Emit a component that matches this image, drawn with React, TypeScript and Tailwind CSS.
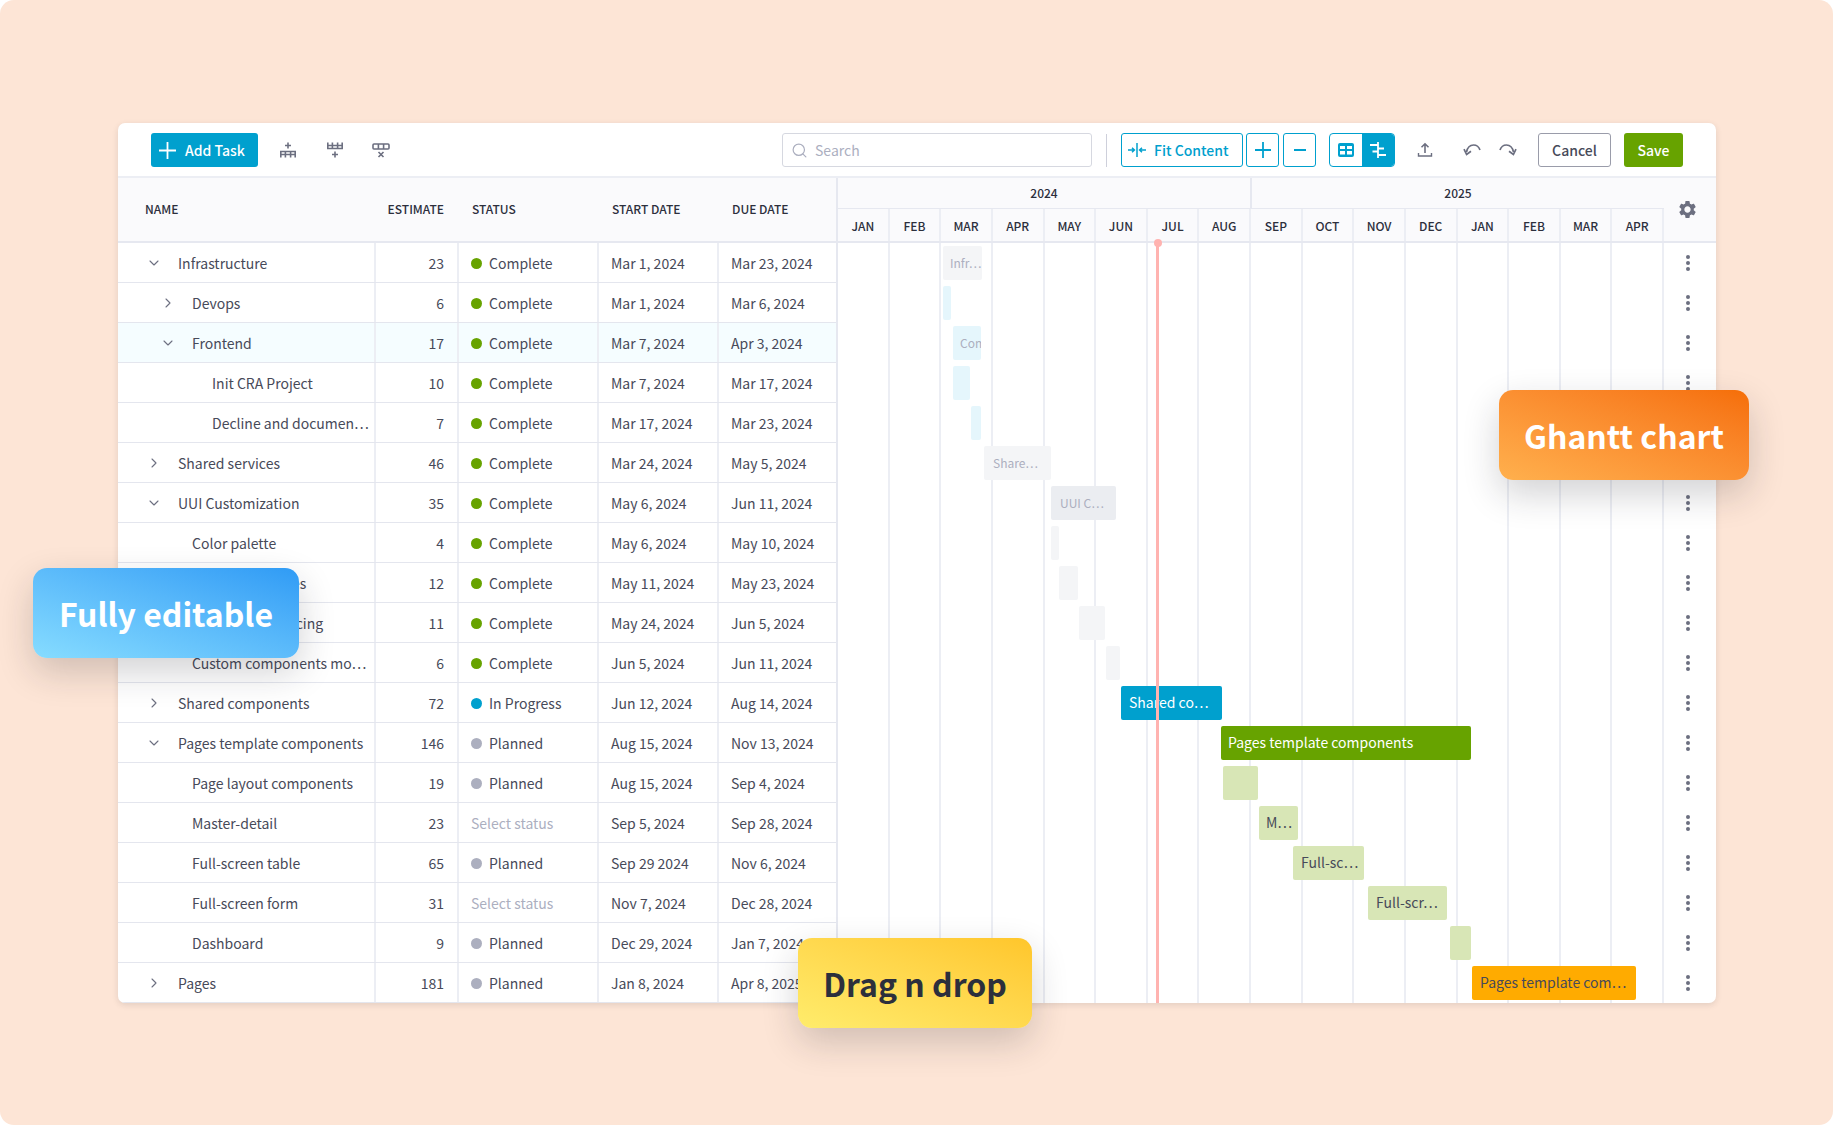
import { MdSettings } from 'react-icons/md';
import { ChevronDown, ChevronRight, Search } from 'lucide-react';

interface Row {
  name: string;
  level: number;
  open?: boolean;
  estimate: number;
  status: string;
  start: string;
  due: string;
  hover?: boolean;
}

const rows: Row[] = [
  { name: 'Infrastructure', level: 0, open: true, estimate: 23, status: 'Complete', start: 'Mar 1, 2024', due: 'Mar 23, 2024' },
  { name: 'Devops', level: 1, open: false, estimate: 6, status: 'Complete', start: 'Mar 1, 2024', due: 'Mar 6, 2024' },
  { name: 'Frontend', level: 1, open: true, estimate: 17, status: 'Complete', start: 'Mar 7, 2024', due: 'Apr 3, 2024', hover: true },
  { name: 'Init CRA Project', level: 2, estimate: 10, status: 'Complete', start: 'Mar 7, 2024', due: 'Mar 17, 2024' },
  { name: 'Decline and documen…', level: 2, estimate: 7, status: 'Complete', start: 'Mar 17, 2024', due: 'Mar 23, 2024' },
  { name: 'Shared services', level: 0, open: false, estimate: 46, status: 'Complete', start: 'Mar 24, 2024', due: 'May 5, 2024' },
  { name: 'UUI Customization', level: 0, open: true, estimate: 35, status: 'Complete', start: 'May 6, 2024', due: 'Jun 11, 2024' },
  { name: 'Color palette', level: 1, estimate: 4, status: 'Complete', start: 'May 6, 2024', due: 'May 10, 2024' },
  { name: 'Spacing variables', level: 1, estimate: 12, status: 'Complete', start: 'May 11, 2024', due: 'May 23, 2024' },
  { name: 'Component spacing', level: 1, estimate: 11, status: 'Complete', start: 'May 24, 2024', due: 'Jun 5, 2024' },
  { name: 'Custom components mo…', level: 1, estimate: 6, status: 'Complete', start: 'Jun 5, 2024', due: 'Jun 11, 2024' },
  { name: 'Shared components', level: 0, open: false, estimate: 72, status: 'In Progress', start: 'Jun 12, 2024', due: 'Aug 14, 2024' },
  { name: 'Pages template components', level: 0, open: true, estimate: 146, status: 'Planned', start: 'Aug 15, 2024', due: 'Nov 13, 2024' },
  { name: 'Page layout components', level: 1, estimate: 19, status: 'Planned', start: 'Aug 15, 2024', due: 'Sep 4, 2024' },
  { name: 'Master-detail', level: 1, estimate: 23, status: 'Select status', start: 'Sep 5, 2024', due: 'Sep 28, 2024' },
  { name: 'Full-screen table', level: 1, estimate: 65, status: 'Planned', start: 'Sep 29 2024', due: 'Nov 6, 2024' },
  { name: 'Full-screen form', level: 1, estimate: 31, status: 'Select status', start: 'Nov 7, 2024', due: 'Dec 28, 2024' },
  { name: 'Dashboard', level: 1, estimate: 9, status: 'Planned', start: 'Dec 29, 2024', due: 'Jan 7, 2024' },
  { name: 'Pages', level: 0, open: false, estimate: 181, status: 'Planned', start: 'Jan 8, 2024', due: 'Apr 8, 2025' },
];

const months = ['JAN', 'FEB', 'MAR', 'APR', 'MAY', 'JUN', 'JUL', 'AUG', 'SEP', 'OCT', 'NOV', 'DEC', 'JAN', 'FEB', 'MAR', 'APR'];

const GREY = 'bg-[#f4f5f7] text-[#acafbf] text-[12px]';
const BLUE = 'bg-[#e5f6fc] text-[#acafbf] text-[12px]';
const MINT = 'bg-[#d8e6b6] text-[#474a59] text-[14px] pb-[2px]';

// x/w in page pixels, one entry per table row
const bars: { x: number; w: number; label?: string; pad?: number; cls: string }[] = [
  { x: 943, w: 39, label: 'Infr…', cls: GREY },
  { x: 943, w: 8, cls: BLUE },
  { x: 953, w: 28, label: 'Complete', cls: BLUE },
  { x: 953, w: 17, cls: BLUE },
  { x: 971, w: 10, cls: BLUE },
  { x: 984, w: 67, label: 'Share…', pad: 9, cls: GREY },
  { x: 1051, w: 65, label: 'UUI C…', pad: 9, cls: 'bg-[#ebedf1] text-[#acafbf] text-[12px]' },
  { x: 1051, w: 8, cls: GREY },
  { x: 1059, w: 19, cls: GREY },
  { x: 1079, w: 26, cls: GREY },
  { x: 1106, w: 14, cls: GREY },
  { x: 1121, w: 101, label: 'Shared co…', pad: 8, cls: 'bg-[#00a0ce] text-white text-[14px] pb-[2px]' },
  { x: 1221, w: 250, label: 'Pages template components', cls: 'bg-[#67a300] text-white text-[14px] pb-[2px]' },
  { x: 1223, w: 35, cls: MINT },
  { x: 1259, w: 39, label: 'M…', cls: MINT },
  { x: 1293, w: 71, label: 'Full-sc…', pad: 8, cls: MINT },
  { x: 1368, w: 79, label: 'Full-scr…', pad: 8, cls: MINT },
  { x: 1450, w: 21, cls: MINT },
  { x: 1472, w: 164, label: 'Pages template com…', pad: 8, cls: 'bg-[#ffab00] text-[#474a59] text-[14px] pb-[2px]' },
];

function AddRowAbove() {
  return (
    <svg width="18" height="18" viewBox="0 0 18 18" fill="none" stroke="#6c6f80" strokeWidth="1.6">
      <path d="M9 1.5v6M6 4.5h6" />
      <path d="M1 10.5h16M1 13.5h16M1.8 10v6.5M6.4 10v6.5M11.6 10v6.5M16.2 10v6.5" />
    </svg>
  );
}

function AddRowBelow() {
  return (
    <svg width="18" height="18" viewBox="0 0 18 18" fill="none" stroke="#6c6f80" strokeWidth="1.6">
      <path d="M9 10.5v6M6 13.5h6" />
      <path d="M1 4.5h16M1 7.5h16M1.8 1.5v6.5M6.4 1.5v6.5M11.6 1.5v6.5M16.2 1.5v6.5" />
    </svg>
  );
}

function DeleteRow() {
  return (
    <svg width="18" height="18" viewBox="0 0 18 18" fill="none" stroke="#6c6f80" strokeWidth="1.6">
      <path d="M6.5 11l5 5M11.5 11l-5 5" />
      <rect x="1" y="3" width="16" height="5" rx="1" />
      <path d="M6.4 3v5M11.6 3v5" />
    </svg>
  );
}

function FitIcon() {
  return (
    <svg width="20" height="18" viewBox="0 0 20 18" fill="none" stroke="#00a0ce" strokeWidth="1.5">
      <path d="M10 2v14" />
      <path d="M1 9h6M5 6.8L7.4 9 5 11.2" />
      <path d="M19 9h-6M15 6.8L12.6 9l2.4 2.2" />
    </svg>
  );
}

function TableIcon() {
  return (
    <svg width="16" height="14" viewBox="0 0 16 14">
      <rect width="16" height="14" rx="2" fill="#00a0ce" />
      <path d="M2 3h5v3H2zM9 3h5v3H9zM2 8h5v3.5H2zM9 8h5v3.5H9z" fill="#fff" />
    </svg>
  );
}

function GanttIcon() {
  return (
    <svg width="18" height="18" viewBox="0 0 18 18" fill="none" stroke="#fff">
      <path d="M9 1v16" strokeWidth="1.8" />
      <path d="M1 4h8M9 7.5h6M3.5 10.5H9M9 14h8" strokeWidth="2.2" />
    </svg>
  );
}

function UploadIcon() {
  return (
    <svg width="16" height="16" viewBox="0 0 16 16" fill="none" stroke="#6c6f80" strokeWidth="1.6">
      <path d="M8 11V2M4.5 5.2L8 1.8l3.5 3.4" />
      <path d="M1.5 11v3h13v-3" strokeWidth="1.4" />
    </svg>
  );
}

function UndoIcon({ flip }: { flip?: boolean }) {
  return (
    <svg width="18" height="14" viewBox="0 0 18 14" fill="none" stroke="#6c6f80" strokeWidth="1.7" className={flip ? '-scale-x-100' : ''}>
      <path d="M3.5 9C4.5 4.5 7.5 2 10.5 2c3 0 5.5 2 6.5 5" />
      <path d="M1 6.2l2.6 5.2 4.4-3.2" />
    </svg>
  );
}

function Badge({ text, cls }: { text: string; cls: string }) {
  return (
    <div className={`absolute h-[90px] flex items-center justify-center rounded-[14px] text-[32px] font-bold leading-none ${cls}`}>
      {text}
    </div>
  );
}

function StatusCell({ status }: { status: string }) {
  if (status === 'Select status') {
    return <span className="text-[#acafbf] ml-[12px]">{status}</span>;
  }
  const dot = status === 'Complete' ? 'bg-[#67a300]' : status === 'In Progress' ? 'bg-[#00a0ce]' : 'bg-[#acafbf]';
  return (
    <div className="flex items-center ml-[12px]">
      <span className={`w-[11px] h-[11px] rounded-full mr-[7px] ${dot}`} />
      <span>{status}</span>
    </div>
  );
}

export default function App() {
  return (
    <div className="w-[1833px] h-[1125px] bg-white overflow-hidden">
      <div className="relative w-full h-full bg-[#fde5d6] rounded-[14px] pt-[123px] pl-[118px] text-[#474a59] text-[14px] font-['Noto_Sans_CJK_SC','Noto_Sans',sans-serif]">
        <div className="w-[1598px] h-[880px] bg-white rounded-[7px] shadow-[0_2px_6px_rgba(29,30,38,0.12)] overflow-hidden flex flex-col">
          {/* toolbar */}
          <div className="h-[55px] shrink-0 border-b-2 border-[#eceef4] flex items-center pl-[33px] pt-[1px]">
            <button className="w-[107px] h-[34px] bg-[#00a0ce] text-white rounded-[3px] flex items-center pl-[8px] gap-[9px] font-medium">
              <svg width="17" height="17" viewBox="0 0 17 17" stroke="#fff" strokeWidth="1.8"><path d="M8.5 0v17M0 8.5h17" /></svg>
              Add Task
            </button>
            <span className="ml-[21px]"><AddRowAbove /></span>
            <span className="ml-[29px]"><AddRowBelow /></span>
            <span className="ml-[28px]"><DeleteRow /></span>

            <div className="ml-[392px] w-[310px] h-[34px] border border-[#d6d8e0] rounded-[3px] flex items-center pl-[8px] gap-[7px] text-[#acafbf]">
              <Search size={17} strokeWidth={1.7} />
              Search
            </div>
            <div className="ml-[14px] w-px h-[33px] bg-[#ced0db]" />
            <button className="ml-[14px] w-[122px] h-[34px] border border-[#00a0ce] rounded-[3px] flex items-center pl-[5px] gap-[7px] text-[#00a0ce] font-medium">
              <FitIcon />
              Fit Content
            </button>
            <button className="ml-[3px] w-[33px] h-[34px] border border-[#00a0ce] rounded-[3px] flex items-center justify-center">
              <svg width="16" height="16" viewBox="0 0 16 16" stroke="#00a0ce" strokeWidth="1.8"><path d="M8 0v16M0 8h16" /></svg>
            </button>
            <button className="ml-[4px] w-[33px] h-[34px] border border-[#00a0ce] rounded-[3px] flex items-center justify-center">
              <svg width="12" height="4" viewBox="0 0 12 4" stroke="#00a0ce" strokeWidth="2"><path d="M0 2h12" /></svg>
            </button>
            <div className="ml-[13px] w-[66px] h-[34px] flex rounded-[4px] border border-[#00a0ce] overflow-hidden">
              <div className="w-[32px] flex items-center justify-center"><TableIcon /></div>
              <div className="flex-1 bg-[#00a0ce] flex items-center justify-center"><GanttIcon /></div>
            </div>
            <span className="ml-[22px]"><UploadIcon /></span>
            <span className="ml-[30px]"><UndoIcon /></span>
            <span className="ml-[18px]"><UndoIcon flip /></span>
            <button className="ml-[21px] w-[73px] h-[34px] border border-[#9a9caa] rounded-[3px] font-medium">Cancel</button>
            <button className="ml-[13px] w-[59px] h-[34px] bg-[#67a300] text-white rounded-[3px] font-medium">Save</button>
          </div>

          <div className="flex flex-1 min-h-0">
            {/* table */}
            <div className="w-[718px] shrink-0 flex flex-col">
              <div className="h-[65px] shrink-0 flex items-center pb-[2px] bg-[#fafafc] border-b-2 border-[#e6e8f0] text-[12px] font-medium text-[#2c2f3c]">
                <div className="w-[256px] pl-[27px]">NAME</div>
                <div className="w-[83px] text-right pr-[13px]">ESTIMATE</div>
                <div className="w-[140px] pl-[15px]">STATUS</div>
                <div className="w-[120px] pl-[15px]">START DATE</div>
                <div className="pl-[15px]">DUE DATE</div>
              </div>
              {rows.map((r) => (
                <div key={r.name} className={`h-[40px] shrink-0 flex items-center border-b border-[#e4e6ee] ${r.hover ? 'bg-[#f5fdff]' : ''}`}>
                  <div className={`w-[256px] h-full flex items-center pt-[2px] ${r.level === 0 ? 'pl-[28px]' : r.level === 1 ? 'pl-[42px]' : 'pl-[94px]'}`}>
                    {r.open === true && <ChevronDown size={16} strokeWidth={1.6} className="text-[#6c6f80] shrink-0 mr-[16px] -mt-[2px]" />}
                    {r.open === false && <ChevronRight size={16} strokeWidth={1.6} className="text-[#6c6f80] shrink-0 mr-[16px] -mt-[2px]" />}
                    {r.open === undefined && r.level === 1 && <span className="w-[32px] shrink-0" />}
                    <span className="whitespace-nowrap">{r.name}</span>
                  </div>
                  <div className="w-[83px] h-full flex items-center justify-end pr-[13px] pt-[2px] border-l-2 border-[#eceef4]">{r.estimate}</div>
                  <div className="w-[140px] h-full flex items-center pt-[2px] border-l-2 border-[#eceef4]"><StatusCell status={r.status} /></div>
                  <div className="w-[120px] h-full flex items-center pl-[12px] pt-[2px] border-l-2 border-[#eceef4]">{r.start}</div>
                  <div className="flex-1 h-full flex items-center pl-[12px] pt-[2px] border-l-2 border-[#eceef4]">{r.due}</div>
                </div>
              ))}
            </div>

            {/* gantt */}
            <div className="w-[828px] shrink-0 flex flex-col border-l-2 border-[#e6e8f0]">
              <div className="h-[31px] shrink-0 flex bg-[#fafafc] border-b border-[#e6e8f0] text-[12px] font-medium text-[#2c2f3c]">
                <div className="flex-1 flex items-center justify-center border-r-2 border-[#e6e8f0]">2024</div>
                <div className="flex-1 flex items-center justify-center">2025</div>
              </div>
              <div className="h-[34px] shrink-0 grid grid-cols-16 bg-[#fafafc] border-b-2 border-[#e6e8f0] text-[12px] font-medium text-[#2c2f3c]">
                {months.map((m, i) => (
                  <div key={i} className="flex items-center justify-center pt-[2px] border-r-2 border-[#eceef4]">{m}</div>
                ))}
              </div>
              <div className="relative flex-1 min-h-0">
                <div className="absolute inset-0 grid grid-cols-16">
                  {months.map((_, i) => (
                    <div key={i} className="border-r-2 border-[#eceef4]" />
                  ))}
                </div>
                {bars.map((b, i) => (
                  <div
                    key={i}
                    className={`absolute h-[34px] rounded-[2px] overflow-hidden flex items-center whitespace-nowrap ${b.cls}`}
                    style={{ left: b.x - 838, width: b.w, top: i * 40 + 3, paddingLeft: b.pad ?? 7 }}
                  >
                    {b.label}
                  </div>
                ))}
                <div className="absolute left-[318px] top-[-1px] bottom-0 w-[3px] bg-[#ffb3b0]" />
                <div className="absolute left-[315.5px] top-[-4px] w-[8px] h-[8px] rounded-full bg-[#ffb3b0]" />
              </div>
            </div>

            {/* row actions */}
            <div className="flex-1 flex flex-col">
              <div className="h-[65px] shrink-0 flex items-center justify-center pr-[6px] bg-[#fafafc] border-b-2 border-[#e6e8f0]">
                <MdSettings size={21} className="text-[#6c6f80]" />
              </div>
              {rows.map((r) => (
                <div key={r.name} className="h-[40px] shrink-0 flex flex-col items-center justify-center gap-[2px] pr-[4px]">
                  <span className="w-[4px] h-[4px] rounded-full bg-[#6c6f80]" />
                  <span className="w-[4px] h-[4px] rounded-full bg-[#6c6f80]" />
                  <span className="w-[4px] h-[4px] rounded-full bg-[#6c6f80]" />
                </div>
              ))}
            </div>
          </div>
        </div>

        <Badge text="Fully editable" cls="left-[33px] top-[568px] w-[266px] text-white bg-gradient-to-tr from-[#86dcff] to-[#2f9bf5] shadow-[0_14px_36px_rgba(29,30,38,0.2)]" />
        <Badge text="Drag n drop" cls="left-[798px] top-[938px] w-[234px] text-[#2c2f3c] bg-gradient-to-tr from-[#ffec6b] to-[#ffc62a] shadow-[0_14px_36px_rgba(29,30,38,0.2)]" />
        <Badge text="Ghantt chart" cls="left-[1499px] top-[390px] w-[250px] text-white bg-gradient-to-tr from-[#ffb04d] to-[#f56e06] shadow-[0_14px_36px_rgba(29,30,38,0.2)]" />
      </div>
    </div>
  );
}
